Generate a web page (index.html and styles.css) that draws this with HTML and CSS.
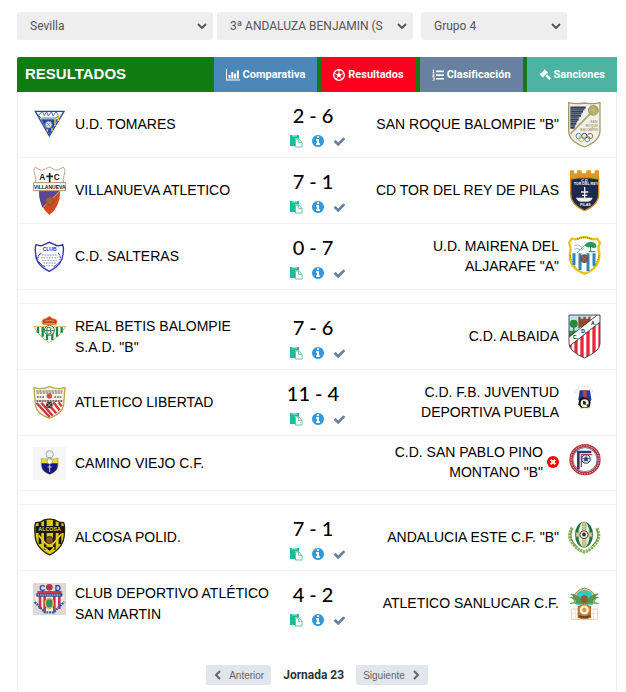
FILE: index.html
```html
<!DOCTYPE html>
<html lang="es">
<head>
<meta charset="utf-8">
<meta name="viewport" content="width=device-width, initial-scale=1">
<title>Resultados</title>
<link rel="stylesheet" href="styles.css">
</head>
<body>
<svg class="sprite" aria-hidden="true">
  <symbol id="i-chart" viewBox="0 0 14 12"><path d="M0 0h1v10.500h13v1H0zM2.500 6h2v3.500h-2zM5.300 3h2v6.500h-2zM8.100 4.500h2v5h-2zM10.900 1.500h2v8h-2z"/></symbol>
  <symbol id="i-ball" viewBox="0 0 12 12"><circle cx="6" cy="6" r="5.300" fill="none" stroke="currentColor" stroke-width="1.300"/><path d="M6 3.800l2.200 1.600-.8 2.600H4.600l-.8-2.600zM4 1l2 1.300L8 1v-.6H4zM.6 5.600l1.700-1.200L2 2.600zM11.400 5.600L9.700 4.400l.3-1.800zM2 9.300l2 .2.400 1.900zM10 9.300l-2 .2-.4 1.900z"/><path d="M6 4V2M8 5.500l1.800-.8M7.300 8l1 1.600M4.700 8l-1 1.600M4 5.500l-1.800-.8" stroke="currentColor" stroke-width=".8"/></symbol>
  <symbol id="i-list" viewBox="0 0 12 12"><path d="M4 1.500h8v1.700H4zM4 5.200h8v1.700H4zM4 8.900h8v1.700H4zM1 .5h1v3h.7v.6H.4v-.6H1V1.400H.4zM.4 4.700h2.200v1.500L1.200 7h1.400v.7H.3v-1L1.800 5.700v-.3H.4zM.4 8.400h2.200v3.200H.3v-.7h1.500v-.6H.8v-.6h1v-.6H.4z"/></symbol>
  <symbol id="i-gavel" viewBox="0 0 12 12"><path d="M5.600.2l3.500 3.500-.8.800-.5-.2-1 1 .9.700.6-.5L12 9.200 10.200 11 6.500 7.300l.4-.7-.7-.8-1.500 1.500.3.500-.8.900L.5 5l.9-.9.500.3 3.200-3.200-.3-.4z"/></symbol>
  <symbol id="i-paste" viewBox="0 0 14 14"><path fill="#1bbc9b" d="M1 1h9v3.500H6V12H1z"/><path fill="#8de0ce" d="M3 1h5v1.500H3z"/><path fill="#fff" stroke="#5fc9a6" d="M6.500 5h3.500l3 3.500V13H6.500z"/><path fill="none" stroke="#8cc99b" d="M9.500 5v3.500H13"/></symbol>
  <symbol id="i-info" viewBox="0 0 1792 1792"><path d="M1152 1376v-160q0-14-9-23t-23-9h-96v-512q0-14-9-23t-23-9h-320q-14 0-23 9t-9 23v160q0 14 9 23t23 9h96v320h-96q-14 0-23 9t-9 23v160q0 14 9 23t23 9h448q14 0 23-9t9-23zm-128-896v-160q0-14-9-23t-23-9h-192q-14 0-23 9t-9 23v160q0 14 9 23t23 9h192q14 0 23-9t9-23zm640 416q0 209-103 385.500t-279.500 279.500-385.500 103-385.500-103-279.500-279.500-103-385.500 103-385.500 279.500-279.500 385.500-103 385.500 103 279.500 279.500 103 385.500z"/></symbol>
  <symbol id="i-check" viewBox="0 0 1792 1792"><path d="M1671 566q0 40-28 68l-724 724-136 136q-28 28-68 28t-68-28l-136-136-362-362q-28-28-28-68t28-68l136-136q28-28 68-28t68 28l294 295 656-657q28-28 68-28t68 28l136 136q28 28 28 68z"/></symbol>
  <symbol id="i-times" viewBox="0 0 12 12"><circle cx="6" cy="6" r="6"/><path d="M3.700 3.700l4.600 4.600M8.300 3.700L3.700 8.300" stroke="#fff" stroke-width="2"/></symbol>
  <symbol id="i-left" viewBox="0 0 10 10"><path d="M7 1L3 5l4 4" fill="none" stroke="currentColor" stroke-width="2"/></symbol>
  <symbol id="i-right" viewBox="0 0 10 10"><path d="M3 1l4 4-4 4" fill="none" stroke="currentColor" stroke-width="2"/></symbol>
  <symbol id="i-down" viewBox="0 0 10 6"><path d="M1 1l4 4 4-4" fill="none" stroke="currentColor" stroke-width="2"/></symbol>
</svg>

<main class="page">
  <form class="filters">
    <div class="filter"><select aria-label="Provincia"><option>Sevilla</option></select><svg class="caret"><use href="#i-down"/></svg></div>
    <div class="filter"><select aria-label="Competición"><option>3ª ANDALUZA BENJAMIN (SEVILLA)</option></select><svg class="caret"><use href="#i-down"/></svg></div>
    <div class="filter"><select aria-label="Grupo"><option>Grupo 4</option></select><svg class="caret"><use href="#i-down"/></svg></div>
  </form>

  <section class="panel">
    <header class="panel-head">
      <h1>RESULTADOS</h1>
      <nav class="tabs">
        <a class="tab compare" href="#"><svg class="wide"><use href="#i-chart"/></svg>Comparativa</a>
        <a class="tab results" href="#"><svg><use href="#i-ball"/></svg>Resultados</a>
        <a class="tab ranking" href="#"><svg><use href="#i-list"/></svg>Clasificación</a>
        <a class="tab sanctions" href="#"><svg><use href="#i-gavel"/></svg>Sanciones</a>
      </nav>
    </header>

    <table class="matches">
      <colgroup><col class="c-crest"><col><col class="c-score"><col><col class="c-crest"></colgroup>
      <tbody>
        <tr>
          <td class="crest"><svg viewBox="0 0 99 99"><path d="M7 10h86L49 84z" fill="#f4f4f4" stroke="#24479d" stroke-width="4"/><path d="M16 21l13-10 4 12 8-12 5 13 9-13 5 13 9-13 7 12-5 7H23z" fill="#fff" stroke="#3b57a5" stroke-width="2.500"/><path d="M24 34h51L49 80z" fill="#24479d"/><path d="M66 33v21M76 21v18M57 60v10M43 62v9" stroke="#d8b945" stroke-width="5"/><circle cx="47" cy="50" r="10" fill="#d5deef" stroke="#7187ba" stroke-width="2"/><path d="M42 45l10 10m0-10L42 55" stroke="#607aaf" stroke-width="2"/></svg></td>
          <td class="home">U.D. TOMARES</td>
          <td class="score"><strong>2 - 6</strong><div class="tools"><a href="#" aria-label="Acta"><svg><use href="#i-paste"/></svg></a><a class="info" href="#" aria-label="Información"><svg><use href="#i-info"/></svg></a><span class="done"><svg><use href="#i-check"/></svg></span></div></td>
          <td class="away">SAN ROQUE BALOMPIE "B"</td>
          <td class="crest"><svg viewBox="0 0 99 138"><path d="M2 2q20 5 47 1 27 4 47-1v84q0 31-47 49Q2 117 2 86z" fill="#eef0f0" stroke="#a59a62" stroke-width="4"/><path d="M7 17h46M7 29h38M7 41h32M7 53h25M7 65h18M7 77h13" stroke="#49305e" stroke-width="7"/><path d="M7 23h42M7 35h34M7 47h27M7 59h21M7 71h15" stroke="#355f5d" stroke-width="5"/><path d="M67 35L7 96" stroke="#b2a15d" stroke-width="5"/><circle cx="76" cy="25" r="15" fill="#b6a867" stroke="#8f844f" stroke-width="2"/><path d="M64 17l24 16M62 25h28M76 10v30" stroke="#dfd5a5"/><g class="gold-text"><text x="67" y="62">SAN</text><text x="53" y="74">ROQUE</text><text x="37" y="86">BALOMPIE</text></g><g fill="none" stroke-width="3"><circle cx="32" cy="102" r="8" stroke="#568db7"/><circle cx="49" cy="102" r="8" stroke="#555"/><circle cx="66" cy="102" r="8" stroke="#c76965"/><circle cx="40" cy="111" r="8" stroke="#c9b866"/><circle cx="58" cy="111" r="8" stroke="#609f7b"/></g></svg></td>
        </tr>
        <tr>
          <td class="crest"><svg viewBox="0 0 99 150"><path d="M7 3q17 13 26 8L49 3l16 8q10 5 26-8 8 9 2 26-5 12 0 22H6q5-10 0-22Q0 12 7 3z" fill="#fff" stroke="#c7a58d" stroke-width="3"/><path d="M18 74h64q-1 51-33 72Q18 123 18 74z" fill="#d6471f"/><path d="M18 74h64L29 125q-11-22-11-51z" fill="#5a4597"/><path d="M82 74L29 125" stroke="#e3aa70" stroke-width="3"/><circle cx="50" cy="105" r="12" fill="#a86033" stroke="#81502b" stroke-width="2"/><path d="M1 50h97v24H1z" fill="#fff" stroke="#b78e75" stroke-width="3"/><text class="black-text initials" x="19" y="43">A</text><text class="black-text initials" x="62" y="43">C</text><path d="M50 21v28M40 31h20" stroke="#222" stroke-width="5"/><text class="black-text banner" x="3" y="68">VILLANUEVA</text></svg></td>
          <td class="home">VILLANUEVA ATLETICO</td>
          <td class="score"><strong>7 - 1</strong><div class="tools"><a href="#" aria-label="Acta"><svg><use href="#i-paste"/></svg></a><a class="info" href="#" aria-label="Información"><svg><use href="#i-info"/></svg></a><span class="done"><svg><use href="#i-check"/></svg></span></div></td>
          <td class="away">CD TOR DEL REY DE PILAS</td>
          <td class="crest"><svg viewBox="0 0 99 124"><path d="M6 1h12v9h9V1h14v9h14V1h14v9h11V1h13v27H6z" fill="#de9822"/><path d="M8 27q42-9 84 0v46q0 32-43 49Q8 104 8 73z" fill="#1e2950" stroke="#c58b28" stroke-width="4"/><text class="white-text" x="40" y="36">C.D</text><text class="white-text" x="17" y="46">TOR DEL REY</text><path d="M50 51v36M39 66h22M42 76h16M27 85h44q-3 8-13 8H40q-10 0-13-8z" stroke="#eee" stroke-width="4" fill="#eee"/><text class="white-text" x="36" y="108">PILAS</text></svg></td>
        </tr>
        <tr>
          <td class="crest"><svg viewBox="0 0 99 99"><path d="M9 14q17 7 26-1l14-6 14 6q12 8 26 1 4 10 1 27-1 34-41 53Q8 75 8 41 5 24 9 14z" fill="#fff" stroke="#2d31b7" stroke-width="4"/><text class="blue-text" x="29" y="32">CLUB</text><path d="M25 39q-11 8-11 21M75 39q9 8 6 20" stroke="#3737a3" stroke-width="4" stroke-dasharray="3 2" fill="none"/><path d="M26 45h47M24 53h50M27 61h45M31 69h37M38 77h24" stroke="#a9a9ca" stroke-width="4" stroke-dasharray="5 3"/><path d="M18 66q10 12 19 14M80 65q-9 12-18 15" stroke="#4548a0" stroke-width="3" fill="none"/></svg></td>
          <td class="home">C.D. SALTERAS</td>
          <td class="score"><strong>0 - 7</strong><div class="tools"><a href="#" aria-label="Acta"><svg><use href="#i-paste"/></svg></a><a class="info" href="#" aria-label="Información"><svg><use href="#i-info"/></svg></a><span class="done"><svg><use href="#i-check"/></svg></span></div></td>
          <td class="away">U.D. MAIRENA DEL ALJARAFE "A"</td>
          <td class="crest"><svg viewBox="0 0 99 126"><path d="M11 8q15 4 23-1 15-8 31 0 9 5 22 1l9 13q-8 14-2 30 3 45-44 62Q1 96 6 51q5-17-3-30z" fill="#fff" stroke="#e9c11b" stroke-width="7"/><path d="M6 58q6 20 18 37M93 58q-4 19-18 37M27 9q22-8 45 0" stroke="#755d1b" stroke-width="3" stroke-dasharray="3 3" fill="none"/><path d="M18 30q10-8 18 0t15-5M18 41q9-7 16-1t14-3" stroke="#8fc4c7" stroke-width="3" fill="none"/><path d="M50 28L27 51" stroke="#7ea6b6" stroke-width="3"/><path d="M50 29q6-13 20-11 17 2 15 16-8 4-16-1-9 4-19-4z" fill="#259a61"/><path d="M68 30v17M62 47h20" stroke="#347a47" stroke-width="3"/><path d="M18 52v35M36 52v50M60 52v53M78 52v37" stroke="#2b86c1" stroke-width="9"/><circle cx="49" cy="68" r="13" fill="#79524b"/><path d="M41 60l16 16m0-16L41 76" stroke="#a8847b" stroke-width="2"/></svg></td>
        </tr>
        <tr class="spacer"><td colspan="5"></td></tr>
      </tbody>
      <tbody>
        <tr>
          <td class="crest"><svg viewBox="0 0 99 123"><path d="M2 31h96Q83 58 49 80 17 60 2 31z" fill="#fff" stroke="#d4b45e" stroke-width="3"/><path d="M15 33v18M29 33v29M42 33v39M58 33v39M72 33v29M86 33v17" stroke="#188b48" stroke-width="7"/><circle cx="49" cy="43" r="15" fill="#f2f6ea" stroke="#188b48" stroke-width="3"/><path d="M42 34v20h9q7-5 0-10 6-6 0-10zM36 44h28" fill="none" stroke="#248c51" stroke-width="3"/><path d="M31 26q-11-17 8-18l10-7 10 7q20 1 10 18z" fill="#c83c2c" stroke="#d19d39" stroke-width="3"/><path d="M35 16q14-7 29 0M32 24q17-5 35 0" stroke="#e9c45d" stroke-width="2" fill="none"/></svg></td>
          <td class="home">REAL BETIS BALOMPIE S.A.D. "B"</td>
          <td class="score"><strong>7 - 6</strong><div class="tools"><a href="#" aria-label="Acta"><svg><use href="#i-paste"/></svg></a><a class="info" href="#" aria-label="Información"><svg><use href="#i-info"/></svg></a><span class="done"><svg><use href="#i-check"/></svg></span></div></td>
          <td class="away">C.D. ALBAIDA</td>
          <td class="crest"><svg viewBox="0 0 99 135"><clipPath id="albaida"><path d="M3 3h93v86q0 22-47 43Q3 111 3 89z"/></clipPath><g clip-path="url(#albaida)"><path d="M0 0h99v135H0z" fill="#fff"/><path d="M0 0h80L0 75z" fill="#bce0ed"/><path d="M0 50h28v15L0 85z" fill="#43884b"/><path d="M31 43V8h7v6h8V8h7v6h8V8h7v20z" fill="#8e4c2c"/><path d="M6 80v60M24 70v70M42 60v80M60 48v90M78 35v100M96 20v100" stroke="#e82838" stroke-width="10"/><path d="M-4 89L98 9" stroke="#222" stroke-width="24"/><path d="M-4 89L98 9" stroke="#fff" stroke-width="20"/></g><circle cx="17" cy="29" r="12" fill="#218a37"/><path d="M17 38v18" stroke="#785837" stroke-width="4"/><g class="black-text"><text x="15" y="76">C.</text><text x="40" y="57">D.</text><text x="69" y="34">A.</text></g><path d="M3 3h93v86q0 22-47 43Q3 111 3 89z" fill="none" stroke="#485050" stroke-width="3"/></svg></td>
        </tr>
        <tr>
          <td class="crest"><svg viewBox="0 0 99 99"><path d="M3 5q23 7 46-3 25 10 47 3-3 35-4 51-3 27-43 41Q9 83 7 56z" fill="#f8f1e9" stroke="#b9a843" stroke-width="4"/><path d="M10 15h80M11 21h77" stroke="#655b4b" stroke-width="3" stroke-dasharray="7 2"/><path d="M12 33h23M64 33h23" stroke="#665f56" stroke-width="4" stroke-dasharray="5 3"/><circle cx="49" cy="30" r="8" fill="#d34d49"/><path d="M10 45h79" stroke="#50453c" stroke-width="5" stroke-dasharray="6 2"/><path d="M11 51l39 42M25 50l34 39M44 53l26 29M61 49l19 24M77 49l9 12" stroke="#ca343b" stroke-width="7"/><circle cx="49" cy="57" r="10" fill="#463b35"/><path d="M43 51l12 12M55 51L43 63" stroke="#c5b8a6" stroke-width="2"/></svg></td>
          <td class="home">ATLETICO LIBERTAD</td>
          <td class="score"><strong>11 - 4</strong><div class="tools"><a href="#" aria-label="Acta"><svg><use href="#i-paste"/></svg></a><a class="info" href="#" aria-label="Información"><svg><use href="#i-info"/></svg></a><span class="done"><svg><use href="#i-check"/></svg></span></div></td>
          <td class="away">C.D. F.B. JUVENTUD DEPORTIVA PUEBLA</td>
          <td class="crest"><svg viewBox="0 0 99 111"><path d="M19 27Q45-12 79 26" fill="none" stroke="#ebe6cd" stroke-width="6" stroke-dasharray="5 4"/><path d="M35 19h31l4 27-8 22H40l-9-22z" fill="#263d9b"/><path d="M45 19h11v38H45z" fill="#cf383e"/><path d="M34 44l10-6 14 5 10 13-4 15H39l-8-10z" fill="#151515"/><circle cx="50" cy="58" r="12" fill="#f3eed5"/><path d="M45 50l9 3-1 10-8-2zM55 63l6-4v10z" fill="#222"/><path d="M34 72q15 8 31-1" fill="none" stroke="#e8e2bb" stroke-width="3"/></svg></td>
        </tr>
        <tr class="short">
          <td class="crest"><svg viewBox="0 0 99 99"><path d="M0 0h99v99H0z" fill="#f6f6f6"/><circle cx="50" cy="22" r="11" fill="#eee" stroke="#aaa" stroke-width="3"/><path d="M25 34q13 6 25-2 12 8 25 2v22q-2 18-25 26-23-8-25-26z" fill="#f0db25" stroke="#998f44" stroke-width="2"/><path d="M26 49h48v8q-2 17-24 25-22-8-24-25z" fill="#141980"/><circle cx="50" cy="43" r="8" fill="#f8f8f8" stroke="#888" stroke-width="2"/><path d="M50 53v22M44 60h12" stroke="#ded09b" stroke-width="3"/></svg></td>
          <td class="home">CAMINO VIEJO C.F.</td>
          <td class="score"></td>
          <td class="away"><span class="withdrawn"><span>C.D. SAN PABLO PINO MONTANO "B"</span><svg><use href="#i-times"/></svg></span></td>
          <td class="crest"><svg viewBox="0 0 99 120"><circle cx="51" cy="50" r="42" fill="#fff" stroke="#b4383e" stroke-width="10"/><circle cx="51" cy="50" r="42" fill="none" stroke="#e6c4c6" stroke-width="3" stroke-dasharray="4 4"/><circle cx="51" cy="50" r="36" fill="none" stroke="#354367" stroke-width="2"/><path d="M31 79V27h39" fill="none" stroke="#293c73" stroke-width="8"/><path d="M40 73V35h33" fill="none" stroke="#bd4547" stroke-width="4"/><circle cx="54" cy="48" r="13" fill="#e6eaf2" stroke="#34416b" stroke-width="3"/><path d="M54 42l6 4-2 7h-8l-2-7zM54 35v7M42 47h6M60 46h6M50 53l-3 6M58 53l4 6" fill="#34416b" stroke="#34416b" stroke-width="2"/></svg></td>
        </tr>
        <tr class="spacer"><td colspan="5"></td></tr>
      </tbody>
      <tbody>
        <tr>
          <td class="crest"><svg viewBox="0 0 99 132"><path d="M8 20q16 0 25-8 16-5 33 0 10 8 26 8 4 10 2 33-1 42-44 64Q6 95 6 53 4 30 8 20z" fill="#ddc51b" stroke="#22220d" stroke-width="4"/><path d="M21 20v64M37 13v88M64 13v88M81 20v64" stroke="#161711" stroke-width="8"/><path d="M8 30h85v21H8z" fill="#171812"/><text class="yellow-text" x="16" y="46">ALCOSA</text><path d="M17 58l25 29M85 54L58 86M34 94l16 14 14-14" stroke="#e2cf35" stroke-width="5"/><circle cx="49" cy="72" r="11" fill="#865628" stroke="#25190d" stroke-width="2"/></svg></td>
          <td class="home">ALCOSA POLID.</td>
          <td class="score"><strong>7 - 1</strong><div class="tools"><a href="#" aria-label="Acta"><svg><use href="#i-paste"/></svg></a><a class="info" href="#" aria-label="Información"><svg><use href="#i-info"/></svg></a><span class="done"><svg><use href="#i-check"/></svg></span></div></td>
          <td class="away">ANDALUCIA ESTE C.F. "B"</td>
          <td class="crest"><svg viewBox="0 0 99 99"><path d="M13 20q-19 30 8 55 11 13 27 18 18-5 28-18 27-25 9-55" fill="none" stroke="#8ab65b" stroke-width="10" stroke-dasharray="7 2"/><path d="M11 27q-9 28 15 50M87 25q11 28-15 50" stroke="#658b45" stroke-width="3" fill="none"/><ellipse cx="48" cy="41" rx="27" ry="39" fill="#167345"/><ellipse cx="48" cy="41" rx="17" ry="38" fill="#e8eee6"/><path d="M43 4h11v74H43zM24 35h48v12H24z" fill="#d7c382" stroke="#aaa06f" stroke-width="2"/><circle cx="48" cy="41" r="12" fill="#efefe7" stroke="#555" stroke-width="3"/><path d="M48 34l6 5-2 7h-8l-2-7z" fill="#333"/></svg></td>
        </tr>
        <tr class="last">
          <td class="crest"><svg viewBox="0 0 99 123"><path d="M0 0h99v96H0z" fill="#dcd9d7"/><path d="M5 38h90L82 80 49 94 17 80z" fill="#f5efed"/><path d="M21 40v38M35 40v48M64 40v48M79 40v38" stroke="#c93745" stroke-width="8"/><text class="blue-text initials" x="19" y="23">C</text><text class="blue-text initials" x="65" y="23">D</text><circle cx="49" cy="13" r="10" fill="#bf3049"/><path d="M13 24h73v8H13z" fill="#c93b45"/><path d="M10 31h78v10H10z" fill="#263f8e"/><path d="M14 36h70" stroke="#dce1ee" stroke-width="3" stroke-dasharray="5 2"/><ellipse cx="49" cy="61" rx="12" ry="15" fill="#318c70" stroke="#ddbd47" stroke-width="5"/><path d="M5 57l31 31h26l31-31" fill="none" stroke="#3c5fa1" stroke-width="7" stroke-dasharray="6 2"/></svg></td>
          <td class="home">CLUB DEPORTIVO ATLÉTICO SAN MARTIN</td>
          <td class="score"><strong>4 - 2</strong><div class="tools"><a href="#" aria-label="Acta"><svg><use href="#i-paste"/></svg></a><a class="info" href="#" aria-label="Información"><svg><use href="#i-info"/></svg></a><span class="done"><svg><use href="#i-check"/></svg></span></div></td>
          <td class="away">ATLETICO SANLUCAR C.F.</td>
          <td class="crest"><svg viewBox="0 0 99 99"><path d="M11 66h78v31H11z" fill="#fff" stroke="#e5d6a8" stroke-width="3"/><path d="M11 80h78M23 66v31M77 66v31" stroke="#e5d6a8" stroke-width="2"/><path d="M21 20q28-33 57 0l6 12-7 17H22l-7-17z" fill="#e3cc98" stroke="#b48c40" stroke-width="3"/><path d="M27 18q22-18 45 0l3 35H24z" fill="#38c6bd"/><path d="M48 45Q22 15 6 21q9 4 11 10-9-4-14 0 20 5 21 16-14-4-20 4 26-4 44 3zM50 45Q79 14 93 21q-10 4-12 10 9-4 14 0-20 5-21 16 14-4 20 4-27-4-44 3z" fill="#529b4d"/><circle cx="49" cy="36" r="11" fill="#8c5d31"/><path d="M29 58q19-12 40 0v34q-20 10-40 0z" fill="#b8742f"/><circle cx="49" cy="69" r="15" fill="#fff2d7" stroke="#d68a35" stroke-width="3"/><path d="M49 61l7 6-3 8h-8l-3-8z" fill="#db963f"/><path d="M32 87q17 7 34 0" stroke="#68402b" stroke-width="5" fill="none"/></svg></td>
        </tr>
      </tbody>
    </table>

    <footer class="pager">
      <button type="button"><svg><use href="#i-left"/></svg>Anterior</button>
      <strong>Jornada 23</strong>
      <button type="button">Siguiente<svg><use href="#i-right"/></svg></button>
    </footer>
  </section>
</main>
</body>
</html>
```
FILE: styles.css
```css
* { box-sizing: border-box; }

body {
  margin: 0;
  background: #fff;
  color: #000;
  font-family: "Liberation Sans", Arial, sans-serif;
  font-size: 14px;
}

a { color: inherit; text-decoration: none; }
svg { display: block; fill: currentColor; flex: none; }
.sprite { position: absolute; width: 0; height: 0; }
.page { padding: 12px 9px 0 17px; }

.filters {
  display: grid;
  grid-template-columns: 200fr 204fr 146fr;
  padding-right: 50px;
  margin-bottom: 17px;
}
.filter { display: grid; align-items: center; color: #555; }
.filter:nth-child(1) { padding-right: 4px; }
.filter:nth-child(2) { padding-right: 8px; }
.filter > * { grid-area: 1 / 1; }
.filter select {
  appearance: none;
  width: 100%;
  min-width: 0;
  height: 28px;
  padding: 0 30px 0 13px;
  border: 0;
  border-radius: 3px;
  background: #eee;
  color: inherit;
  font: 12px Roboto, "Liberation Sans", sans-serif;
}
.caret {
  width: 10px;
  height: 6px;
  margin-right: 6px;
  justify-self: end;
  pointer-events: none;
}

.panel-head {
  display: flex;
  align-items: stretch;
  justify-content: space-between;
  height: 35px;
  padding-left: 8px;
  border-radius: 2px 2px 0 0;
  background: #117c11;
  color: #fff;
}
.panel-head h1 { margin: 0; font-size: 15px; line-height: 34px; }
.tabs { display: flex; gap: 4px; }
.tab {
  display: flex;
  align-items: center;
  gap: 3px;
  padding: 0 12px;
  font: bold 11px Roboto, "Liberation Sans", sans-serif;
}
.tab svg { width: 12px; height: 12px; }
.tab .wide { width: 14px; }
.compare { background: #4c87b9; }
.results { background: #ff001e; }
.ranking { background: #6881a1; }
.sanctions { background: #4db3a2; }

.matches {
  width: 100%;
  table-layout: fixed;
  border-collapse: separate;
  border-spacing: 0;
  border: solid #eaedf1;
  border-width: 0 1px;
}
.c-crest { width: 57px; }
.c-score { width: 84px; }
.matches td {
  height: 66px;
  padding: 0;
  border-bottom: 1px solid #eff1f5;
  vertical-align: middle;
}
.matches .short td { height: 55px; }
.matches .spacer td { height: 14px; }
.matches .last td { border-color: transparent; }
.matches .crest { padding-left: 15px; }
.matches .away + .crest { padding-left: 9px; }
.crest svg { width: 33px; }
.home { line-height: 21px; }
.matches .away { padding: 0 0 2px 8px; line-height: 20px; text-align: right; }
.withdrawn { display: flex; align-items: center; justify-content: flex-end; gap: 4px; }
.withdrawn svg { width: 12px; height: 12px; color: #f00; }

.matches .score { padding-top: 7px; text-align: center; }
.score strong {
  display: block;
  padding-right: 8px;
  font: 500 20px/26px Lato, "Liberation Sans", sans-serif;
}
.tools {
  display: flex;
  align-items: center;
  justify-content: center;
  gap: 8px;
  height: 26px;
}
.tools svg { width: 14px; height: 14px; }
.tools .done svg { width: 13px; height: 13px; }
.info { color: #3598dc; }
.done { color: #67809f; }

.crest text { font-family: "Liberation Sans", sans-serif; font-weight: bold; font-size: 11px; }
.gold-text text { fill: #b2a15d; font-size: 10px; }
.black-text { fill: #111; }
.crest .initials { font-size: 25px; }
.crest .banner { font-size: 15px; }
.white-text { fill: #fff; }
.blue-text { fill: #292b9c; }
.crest .blue-text:not(.initials) { font-size: 15px; }
.yellow-text { fill: #ead537; }
.crest .yellow-text { font-size: 16px; }
.crest .black-text text { font-size: 15px; }

.pager {
  display: flex;
  align-items: center;
  justify-content: center;
  gap: 12px;
  padding: 28px 0 7px;
  border: solid #eaedf1;
  border-width: 0 1px;
}
.pager strong { color: #333; font: bold 12px Roboto, "Liberation Sans", sans-serif; }
.pager button {
  display: flex;
  align-items: center;
  gap: 6px;
  height: 20px;
  padding: 0 7px;
  border: 0;
  border-radius: 2px;
  background: #e1e5ec;
  color: #666;
  font: 10px "Liberation Sans", sans-serif;
}
.pager button svg { width: 10px; height: 10px; }
```
